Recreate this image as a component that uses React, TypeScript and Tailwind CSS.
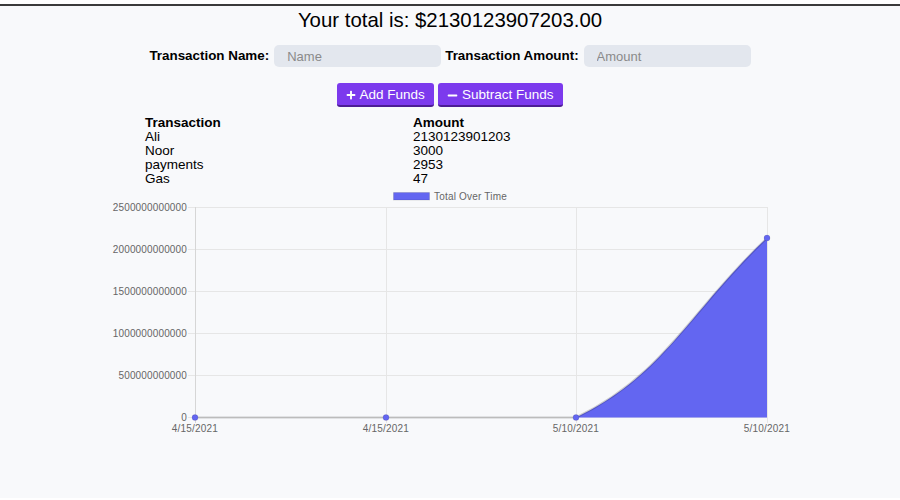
import React from "react";
import { FaPlus, FaMinus } from "react-icons/fa";

const rows: [string, string][] = [
  ["Ali", "2130123901203"],
  ["Noor", "3000"],
  ["payments", "2953"],
  ["Gas", "47"],
];

const yTicks = [
  { y: 207, label: "2500000000000" },
  { y: 249, label: "2000000000000" },
  { y: 291, label: "1500000000000" },
  { y: 333, label: "1000000000000" },
  { y: 375, label: "500000000000" },
  { y: 417, label: "0" },
];

const xTicks = [
  { x: 195, label: "4/15/2021" },
  { x: 386, label: "4/15/2021" },
  { x: 576, label: "5/10/2021" },
  { x: 767, label: "5/10/2021" },
];

function Chart() {
  return (
    <svg
      width={900}
      height={254}
      viewBox="0 186 900 254"
      className="block"
      style={{ fontFamily: '"Liberation Sans", Arial, sans-serif' }}
    >
      <rect x={393.5} y={192.5} width={36} height={7.5} fill="#6366f1" stroke="rgba(0,0,0,0.12)" strokeWidth={1} />
      <text x={434} y={199.5} fontSize={10} fill="#666" letterSpacing={0.2}>
        Total Over Time
      </text>
      {yTicks.map((t) => (
        <g key={t.y}>
          <line x1={188} x2={767} y1={t.y + 0.5} y2={t.y + 0.5} stroke="#e6e6e6" strokeWidth={1} />
          <text x={187} y={t.y + 3.5} fontSize={10} fill="#666" textAnchor="end" letterSpacing={0.15}>
            {t.label}
          </text>
        </g>
      ))}
      {xTicks.map((t, i) => (
        <g key={i}>
          <line
            x1={t.x + 0.5}
            x2={t.x + 0.5}
            y1={207}
            y2={423}
            stroke={i === 0 ? "#d6d6d6" : "#e6e6e6"}
            strokeWidth={1}
          />
          <text x={t.x} y={431.5} fontSize={10} fill="#666" textAnchor="middle" letterSpacing={0.2}>
            {t.label}
          </text>
        </g>
      ))}
      <path d="M576,417.5 C664.3,375.5 690.6,309.6 767,238 L767,417.5 Z" fill="#6366f1" />
      <path
        d="M195,417.5 L576,417.5 C664.3,375.5 690.6,309.6 767,238"
        fill="none"
        stroke="rgba(0,0,0,0.18)"
        strokeWidth={2}
      />
      {[
        [195, 417.5],
        [386, 417.5],
        [576, 417.5],
        [767, 238],
      ].map(([x, y], i) => (
        <circle key={i} cx={x} cy={y} r={3} fill="#6366f1" stroke="rgba(0,0,0,0.1)" strokeWidth={1} />
      ))}
    </svg>
  );
}

export default function App() {
  return (
    <div
      className="bg-white pt-[4px] min-h-[500px]"
      style={{ fontFamily: '"Liberation Sans", Arial, Helvetica, sans-serif' }}
    >
      <div className="border-t-2 border-[#3a3a3a] bg-[#f8f9fb] min-h-[494px]">
        <h1 className="text-center text-[20.4px] leading-[28px] text-black">
          Your total is: $2130123907203.00
        </h1>

        <div className="mt-[11px] flex justify-center items-center">
          <label className="text-[13.4px] font-bold text-black">Transaction Name:</label>
          <input
            placeholder="Name"
            className="ml-[5px] h-[22px] w-[167px] rounded-[5px] bg-[#e3e7ee] pl-[13px] text-[13px] placeholder:text-[#8a8a8a] outline-none"
          />
          <label className="ml-[4px] text-[13.4px] font-bold text-black">Transaction Amount:</label>
          <input
            placeholder="Amount"
            className="ml-[5px] h-[22px] w-[167px] rounded-[5px] bg-[#e3e7ee] pl-[13px] text-[13px] placeholder:text-[#8a8a8a] outline-none"
          />
        </div>

        <div className="mt-[16px] flex justify-center gap-[4px]">
          <button className="flex h-[24px] items-center gap-[4px] rounded-[3px] border-b-2 border-[#4c1d95] bg-[#7c3aed] pt-[2px] pl-[9px] pr-[9px] text-[13.5px] text-white">
            <FaPlus size={10} />
            <span>Add Funds</span>
          </button>
          <button className="flex h-[24px] items-center gap-[4px] rounded-[3px] border-b-2 border-[#4c1d95] bg-[#7c3aed] pt-[2px] pl-[9px] pr-[10px] text-[13.5px] text-white">
            <FaMinus size={11} />
            <span>Subtract Funds</span>
          </button>
        </div>

        <div className="mt-[9px] ml-[145px] h-[70px] grid grid-cols-[268px_auto] text-[13.5px] leading-[13.8px] text-black">
          <div className="font-bold">Transaction</div>
          <div className="font-bold">Amount</div>
          {rows.map(([n, a]) => (
            <React.Fragment key={n}>
              <div>{n}</div>
              <div>{a}</div>
            </React.Fragment>
          ))}
        </div>

        <Chart />
      </div>
    </div>
  );
}
